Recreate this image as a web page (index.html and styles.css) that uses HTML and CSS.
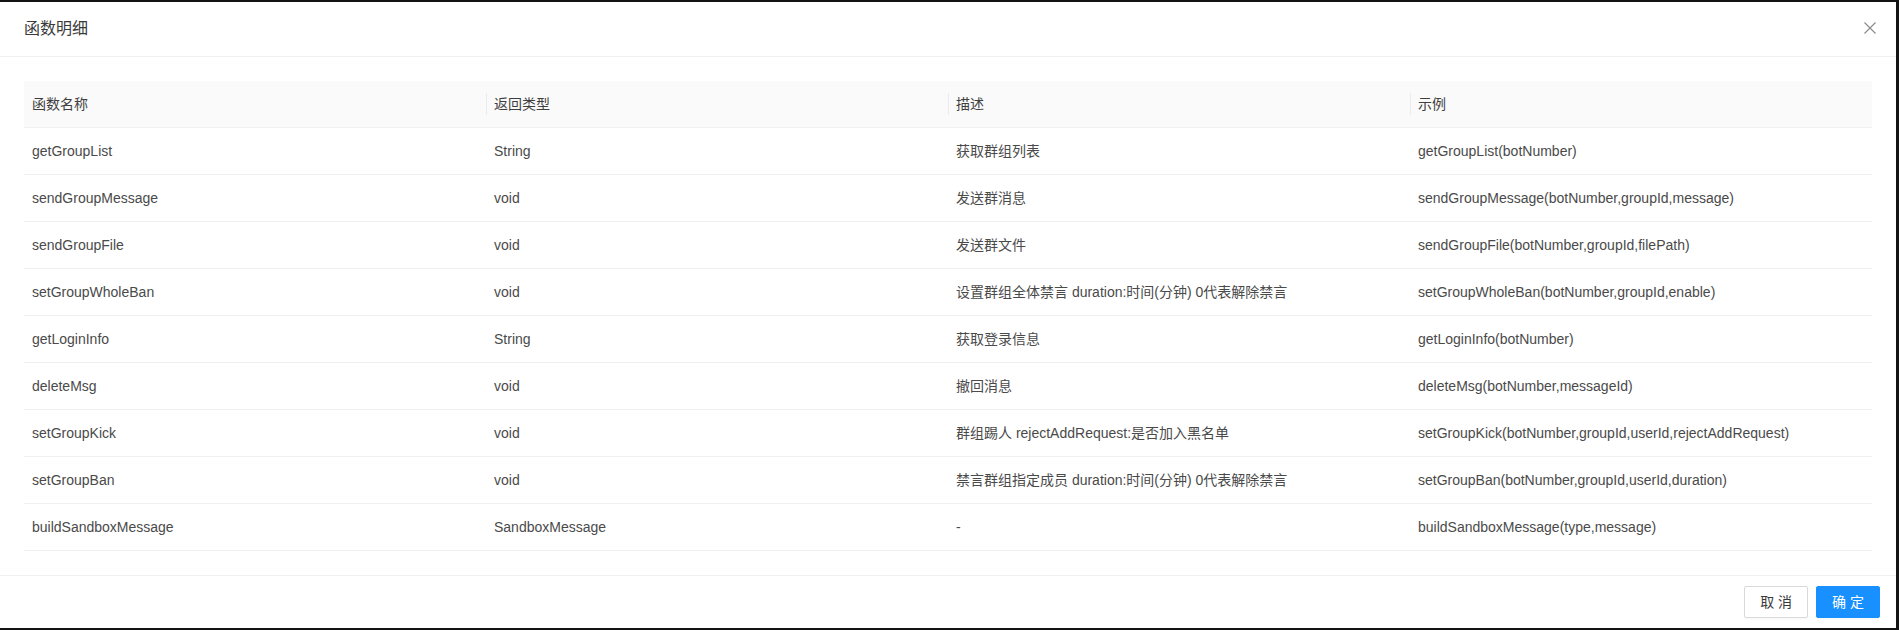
FILE: index.html
```html
<!DOCTYPE html>
<html lang="zh-CN">
<head>
<meta charset="utf-8">
<title>函数明细</title>
<link rel="stylesheet" href="styles.css">
</head>
<body>
<div class="modal">
  <div class="modal-header">
    <div class="modal-title">函数明细</div>
    <button class="modal-close" aria-label="Close">
      <svg viewBox="0 0 12 12" width="12" height="12"><path d="M0.5 0.5 L11.5 11.5 M11.5 0.5 L0.5 11.5" stroke="currentColor" stroke-width="1.2" fill="none"/></svg>
    </button>
  </div>
  <div class="modal-body">
    <table class="table">
      <thead>
        <tr>
          <th>函数名称</th>
          <th class="sep">返回类型</th>
          <th class="sep">描述</th>
          <th class="sep">示例</th>
        </tr>
      </thead>
      <tbody>
        <tr><td>getGroupList</td><td>String</td><td>获取群组列表</td><td>getGroupList(botNumber)</td></tr>
        <tr><td>sendGroupMessage</td><td>void</td><td>发送群消息</td><td>sendGroupMessage(botNumber,groupId,message)</td></tr>
        <tr><td>sendGroupFile</td><td>void</td><td>发送群文件</td><td>sendGroupFile(botNumber,groupId,filePath)</td></tr>
        <tr><td>setGroupWholeBan</td><td>void</td><td>设置群组全体禁言 duration:时间(分钟) 0代表解除禁言</td><td>setGroupWholeBan(botNumber,groupId,enable)</td></tr>
        <tr><td>getLoginInfo</td><td>String</td><td>获取登录信息</td><td>getLoginInfo(botNumber)</td></tr>
        <tr><td>deleteMsg</td><td>void</td><td>撤回消息</td><td>deleteMsg(botNumber,messageId)</td></tr>
        <tr><td>setGroupKick</td><td>void</td><td>群组踢人 rejectAddRequest:是否加入黑名单</td><td>setGroupKick(botNumber,groupId,userId,rejectAddRequest)</td></tr>
        <tr><td>setGroupBan</td><td>void</td><td>禁言群组指定成员 duration:时间(分钟) 0代表解除禁言</td><td>setGroupBan(botNumber,groupId,userId,duration)</td></tr>
        <tr><td>buildSandboxMessage</td><td>SandboxMessage</td><td>-</td><td>buildSandboxMessage(type,message)</td></tr>
      </tbody>
    </table>
  </div>
  <div class="modal-footer">
    <button class="btn">取 消</button>
    <button class="btn btn-primary">确 定</button>
  </div>
</div>
</body>
</html>
```
FILE: styles.css
```css
html, body {
  margin: 0;
  padding: 0;
}
body {
  background: #141414;
  height: 630px;
  overflow: hidden;
  font-family: "Liberation Sans", Arial, "Noto Sans CJK SC", sans-serif;
  font-size: 14px;
  color: #4a4a4a;
}
.modal {
  position: relative;
  margin-top: 2px;
  width: 1896px;
  background: #fff;
}
.modal-header {
  padding: 16px 24px;
  border-bottom: 1px solid #f0f0f0;
}
.modal-title {
  font-size: 16px;
  line-height: 22px;
  color: #3a3a3a;
  font-family: "Liberation Sans", "Noto Sans CJK SC", sans-serif;
}
.modal-close {
  position: absolute;
  top: 20px;
  right: 20px;
  width: 12px;
  height: 12px;
  padding: 0;
  border: 0;
  background: transparent;
  color: rgba(0, 0, 0, 0.45);
  display: flex;
}
.modal-body {
  padding: 24px;
}
.table {
  width: 100%;
  border-collapse: collapse;
  table-layout: fixed;
}
.table th,
.table td {
  padding: 12px 8px;
  line-height: 22px;
  text-align: left;
  font-weight: normal;
  border-bottom: 1px solid #f0f0f0;
  white-space: nowrap;
  overflow: hidden;
}
.table th {
  background: #fafafa;
  position: relative;
  color: #3f3f3f;
}
.table th.sep::before {
  content: "";
  position: absolute;
  left: 0;
  top: 50%;
  width: 1px;
  height: 22px;
  transform: translateY(-50%);
  background: rgba(0, 0, 0, 0.06);
}
.modal-footer {
  display: flex;
  justify-content: flex-end;
  gap: 8px;
  padding: 10px 16px;
  border-top: 1px solid #f0f0f0;
}
.btn {
  height: 32px;
  padding: 4px 15px;
  font-size: 14px;
  line-height: 22px;
  border: 1px solid #d9d9d9;
  border-radius: 2px;
  background: #fff;
  color: #3a3a3a;
  font-family: "Liberation Sans", "Noto Sans CJK SC", sans-serif;
  box-shadow: 0 2px 0 rgba(0, 0, 0, 0.015);
}
.btn-primary {
  background: #1890ff;
  border-color: #1890ff;
  color: #fff;
}
```
